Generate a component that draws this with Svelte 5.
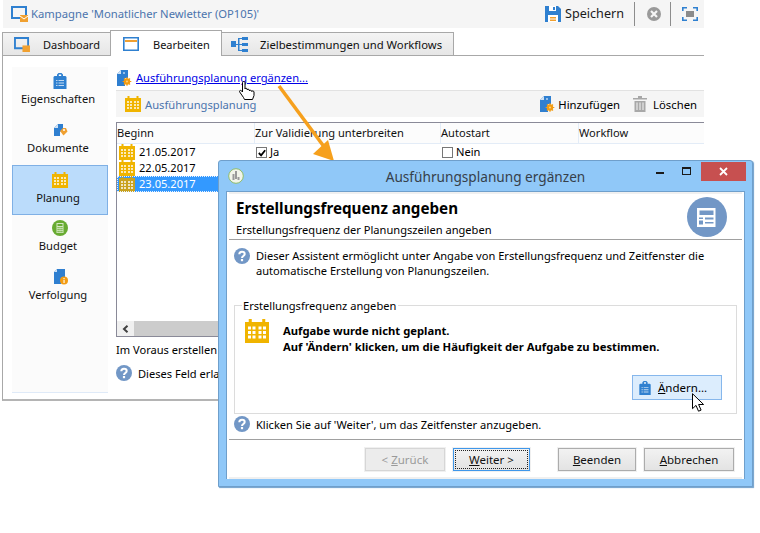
<script>
  const sideItems = [
    { label: 'Eigenschaften', icon: 'clip' },
    { label: 'Dokumente', icon: 'doc' },
    { label: 'Planung', icon: 'cal', active: true },
    { label: 'Budget', icon: 'calc' },
    { label: 'Verfolgung', icon: 'info' }
  ];
  const rows = [
    { date: '21.05.2017', val: 'Ja', start: 'Nein' },
    { date: '22.05.2017' },
    { date: '23.05.2017', selected: true }
  ];
</script>

{#snippet cal(size, color = '#f0b400', cells = 0.72)}
  <svg width={size} height={size} viewBox="0 0 16 16" class="ico">
    <path fill={color} d="M0 2h2.500V0h2v2h7V0h2v2H16v14H0z"/>
    <path fill="#fff" opacity={cells} d="M2 5h2v2H2zM5 5h2v2H5zM9 5h2v2H9zM12 5h2v2h-2zM2 8h2v2H2zM5 8h2v2H5zM9 8h2v2H9zM12 8h2v2h-2zM2 11h2v2H2zM5 11h2v2H5zM9 11h2v2H9zM12 11h2v2h-2z"/>
  </svg>
{/snippet}

{#snippet clip(size)}
  <svg width={size} height={size} viewBox="0 0 16 16" class="ico">
    <path fill="#2f80d0" d="M2.500 3H5V1.500L6.500 0h3L11 1.500V3h2.500l1 1v12h-13V4z"/>
    <path fill="#fff" d="M6.800 1.500h2.400V3H6.800z"/>
    <path fill="#fff" opacity=".7" d="M4 7h1.500v1H4zM6.500 7H12v1H6.500zM4 9.500h1.500v1H4zM6.500 9.500H12v1H6.500zM4 12h1.500v1H4zM6.500 12H12v1H6.500z"/>
  </svg>
{/snippet}

{#snippet docadd(size)}
  <svg width={size} height={size} viewBox="0 0 16 16" class="ico">
    <path fill="#2f7fd0" d="M5 0h7v8H9v8H1V4z"/>
    <path fill="#cfe2f5" d="M5 0v4H1z"/>
    <path fill="#fff" d="M7 2h2v2H7z" opacity=".5"/>
    <circle cx="11" cy="11.500" r="3.200" fill="#f39c12"/>
    <path stroke="#f39c12" stroke-width="1.200" d="M11 7.200v8.600M6.700 11.500h8.600M8 8.500l6 6M14 8.500l-6 6"/>
    <circle cx="11" cy="11.500" r="1" fill="#ffd27a"/>
  </svg>
{/snippet}

{#snippet sideIcon(kind)}
  {#if kind === 'clip'}
    {@render clip(16)}
  {:else if kind === 'doc'}
    <svg width="16" height="16" viewBox="0 0 16 16" class="ico">
      <path fill="#2f7fd0" d="M6 2h5v5l-3 3v4H2V6z"/><path fill="#cfe2f5" d="M6 2v4H2z"/>
      <path fill="#f0a030" d="M8 9l3-3h3l1.500 3.500-4 4z"/>
      <circle cx="12" cy="8" r="1" fill="#fff"/>
    </svg>
  {:else if kind === 'cal'}
    {@render cal(16)}
  {:else if kind === 'calc'}
    <svg width="16" height="16" viewBox="0 0 16 16" class="ico">
      <circle cx="8" cy="8" r="8" fill="#68ab32"/>
      <path fill="#d5e8c3" d="M4.500 3h7v10h-7z"/>
      <path fill="#68ab32" d="M5.500 4h5v2h-5zM5.500 7h1.200v1.200H5.500zM7.400 7h1.200v1.200H7.400zM9.300 7h1.200v1.200H9.300zM5.500 9h1.200v1.200H5.500zM7.400 9h1.200v1.200H7.400zM9.300 9h1.200v1.200H9.300zM5.500 11h1.200v1.200H5.500zM7.400 11h1.200v1.200H7.400zM9.300 11h1.200v1.200H9.300z"/>
    </svg>
  {:else}
    <svg width="16" height="16" viewBox="0 0 16 16" class="ico">
      <path fill="#2f7fd0" d="M5 0h8v9H9v6H2V3z"/><path fill="#cfe2f5" d="M5 0v3H2z"/>
      <circle cx="12" cy="11.500" r="4" fill="#f39c12"/>
      <path fill="#fff" d="M11.500 9h1.100v1.100h-1.100zM11.500 10.800h1.100V14h-1.100z"/>
    </svg>
  {/if}
{/snippet}

{#snippet help(size)}
  <svg width={size} height={size} viewBox="0 0 16 16" class="ico">
    <circle cx="8" cy="8" r="8" fill="#7297c6"/>
    <path fill="none" stroke="#fff" stroke-width="2" d="M5.300 6.200C5.300 4.600 6.500 3.700 8 3.700c1.600 0 2.700 1 2.700 2.300 0 2-2.700 2-2.700 4"/>
    <rect x="6.900" y="11" width="2.200" height="2.200" fill="#fff"/>
  </svg>
{/snippet}

<div class="page">
  <div class="main">
    <header class="titlebar">
      <svg width="17" height="16" viewBox="0 0 17 16" class="ico">
        <path fill="none" stroke="#2f80d0" stroke-width="2" d="M1 1h14v11H1z"/>
        <path fill="#f0a030" d="M9 9h8v7H9z"/>
        <path fill="none" stroke="#fff" d="M9 10l4 3 4-3"/>
      </svg>
      <span class="campaign">Kampagne 'Monatlicher Newletter (OP105)'</span>
      <div class="spacer"></div>
      <svg width="16" height="16" viewBox="0 0 16 16" class="ico">
        <path fill="#2f80d0" d="M0 0h13l3 3v13H0z"/>
        <path fill="#fff" d="M4 0h7v5H4z"/>
        <path fill="#2f80d0" d="M8 1h2v3H8z"/>
        <path fill="#fff" d="M3 9h10v7H3z"/>
        <path fill="#f0a030" d="M5 11h6v1.500H5zM5 13.500h6V15H5z"/>
      </svg>
      <span class="save">Speichern</span>
      <i class="vsep"></i>
      <svg width="16" height="16" viewBox="0 0 16 16" class="ico cancel">
        <circle cx="8" cy="8" r="7" fill="#9a9a9a"/>
        <path stroke="#f5f5f5" stroke-width="2.200" d="M5 5l6 6M11 5l-6 6"/>
      </svg>
      <i class="vsep second"></i>
      <svg width="16" height="14" viewBox="0 0 16 14" class="ico fit">
        <path fill="none" stroke="#2f80d0" stroke-width="1.600" d="M.8 4V.8H5M11 .8h4.200V4M15.200 10v3.200H11M5 13.200H.8V10"/>
        <path fill="#8a8a8a" d="M4 4h8v6H4z"/>
      </svg>
    </header>

    <nav class="tabs">
      <div class="tab first">
        <svg width="16" height="15" viewBox="0 0 17 16" class="ico">
          <path fill="none" stroke="#2f80d0" stroke-width="2" d="M1 1h14v11H1z"/>
          <path fill="#f0a030" d="M9 9h8v7H9z"/>
        </svg>
        <span>Dashboard</span>
      </div>
      <div class="tab active">
        <svg width="16" height="14" viewBox="0 0 16 14" class="ico">
          <path fill="none" stroke="#2f80d0" stroke-width="1.600" d="M.8.8h14.400v12.400H.8z"/>
          <path fill="#f0a030" d="M2 3h12v2H2z"/>
        </svg>
        <span>Bearbeiten</span>
      </div>
      <div class="tab third">
        <svg width="17" height="15" viewBox="0 0 17 15" class="ico">
          <path fill="#2f80d0" d="M0 4h5v6H0zM11 0h6v3h-6zM11 6h6v3h-6zM11 12h6v3h-6zM7 1h1.500v13H7zM7 1h4v1H7zM5 7h6v1H5zM7 13h4v1H7z"/>
        </svg>
        <span>Zielbestimmungen und Workflows</span>
      </div>
    </nav>

    <div class="body">
      <aside class="sidebar">
        {#each sideItems as item}
          <div class="side-item" class:active={item.active}>
            {@render sideIcon(item.icon)}
            <span>{item.label}</span>
          </div>
        {/each}
      </aside>

      <section class="content">
        <div class="linkrow">
          {@render docadd(16)}
          <a href="#top" onclick={(e) => e.preventDefault()}>Ausführungsplanung ergänzen...</a>
        </div>

        <div class="toolbar">
          {@render cal(16)}
          <span class="tool-title">Ausführungsplanung</span>
          <div class="spacer"></div>
          {@render docadd(16)}
          <span class="tool-btn">Hinzufügen</span>
          <svg width="14" height="16" viewBox="0 0 14 16" class="ico trash">
            <path fill="#a8a8a8" d="M0 2h5V0h4v2h5v1.500H0zM1.500 5h11v11h-11z"/>
            <path fill="#f5f5f5" d="M3.500 6.500h1V14h-1zM6.500 6.500h1V14h-1zM9.500 6.500h1V14h-1z"/>
          </svg>
          <span class="tool-btn last">Löschen</span>
        </div>

        <div class="list">
          <div class="row head">
            <span>Beginn</span>
            <span>Zur Validierung unterbreiten</span>
            <span>Autostart</span>
            <span>Workflow</span>
          </div>
          <div class="rows">
            {#each rows as r}
              <div class="row item">
                <span class="date" class:selected={r.selected}>
                  {@render cal(16, r.selected ? '#c9a21e' : '#f0b400')}
                  <b>{r.date}</b>
                </span>
                <span class="check">
                  {#if r.val}<i class="box on"><svg width="10" height="10" viewBox="0 0 11 11"><path fill="none" stroke="#000" stroke-width="2" d="M2 5.500l2.500 2.500L9 2.500"/></svg></i>{r.val}{/if}
                </span>
                <span class="check">
                  {#if r.start}<i class="box"></i>{r.start}{/if}
                </span>
                <span></span>
              </div>
            {/each}
          </div>
          <div class="scroll">
            <span class="scroll-btn">
              <svg width="7" height="8" viewBox="0 0 7 8"><path fill="none" stroke="#404040" stroke-width="2" d="M5.500 .8L2 4l3.500 3.200"/></svg>
            </span>
          </div>
        </div>

        <div class="advance">Im Voraus erstellen</div>
        <div class="hint">
          {@render help(16)}
          <span>Dieses Feld erlaubt</span>
        </div>
      </section>
    </div>
  </div>

  <svg class="arrow" width="70" height="85" viewBox="0 0 70 85">
    <path fill="none" stroke="#f6a01d" stroke-width="3.500" d="M3 2l46 62"/>
    <path fill="#f6a01d" d="M58 77L37 70l15-14z"/>
  </svg>

  <svg class="hand" width="17" height="20" viewBox="0 0 17 20">
    <path fill="#fff" stroke="#000" d="M3.500 1.500c0-1.300 2.500-1.300 2.500 0V8c0-1 2-1 2.200 0V9c0-1 2-1 2.200 0v1c0-1 2-1 2.300 0V10.500c0-.8 2.300-.8 2.300.5v3.500l-1.500 4h-8l-1-2L.7 11c-.7-1.300 1-2.300 2-1l.8 1z"/>
  </svg>

  <div class="dialog">
    <div class="dlg-title">
      <svg width="16" height="16" viewBox="0 0 16 16" class="ico">
        <circle cx="8" cy="8" r="7.300" fill="#f2f5ea" stroke="#8fbc6a"/>
        <path fill="#9a9a9a" d="M7 3h2v8H7zM4.500 6h2v6h-2zM9.500 9h2v3h-2z"/>
      </svg>
      <span class="dlg-name">Ausführungsplanung ergänzen</span>
      <div class="winctl">
        <i class="min"></i>
        <i class="max"></i>
        <span class="close">
          <svg width="9" height="9" viewBox="0 0 9 9"><path stroke="#fff" stroke-width="1.800" d="M1 1l7 7M8 1L1 8"/></svg>
        </span>
      </div>
    </div>

    <div class="dlg-inner">
      <div class="dlg-head">
        <div>
          <h1>Erstellungsfrequenz angeben</h1>
          <p>Erstellungsfrequenz der Planungszeilen angeben</p>
        </div>
        <svg width="40" height="40" viewBox="0 0 40 40" class="ico head-ico">
          <circle cx="20" cy="20" r="20" fill="#7297c6"/>
          <path fill="#fff" d="M10 11h18.500v19H10z"/>
          <path fill="#7297c6" d="M12.500 13.500h14V18h-14zM12 20.500h4v1.500h-4zM12 23.500h4v4h-4zM18 20.500h8.500v2H18zM18 25h8.500v1.500H18z"/>
        </svg>
      </div>

      <div class="intro">
        {@render help(16)}
        <p>Dieser Assistent ermöglicht unter Angabe von Erstellungsfrequenz und Zeitfenster die<br>automatische Erstellung von Planungszeilen.</p>
      </div>

      <fieldset>
        <legend>Erstellungsfrequenz angeben</legend>
        <div class="msg">
          {@render cal(24, '#f0b400', 1)}
          <p>Aufgabe wurde nicht geplant.<br>Auf 'Ändern' klicken, um die Häufigkeit der Aufgabe zu bestimmen.</p>
        </div>
        <div class="change-wrap">
          <button class="change">
            {@render clip(14)}
            <span><u>Ä</u>ndern...</span>
          </button>
        </div>
      </fieldset>

      <div class="next-hint">
        {@render help(16)}
        <span>Klicken Sie auf 'Weiter', um das Zeitfenster anzugeben.</span>
      </div>

      <footer class="dlg-foot">
        <button class="btn back" disabled>&lt; <u>Z</u>urück</button>
        <button class="btn next"><span class="dots"><u>W</u>eiter &gt;</span></button>
        <button class="btn finish"><u>B</u>eenden</button>
        <button class="btn abort"><u>A</u>bbrechen</button>
      </footer>
    </div>
  </div>

  <svg class="pointer" width="13" height="20" viewBox="0 0 13 20">
    <path fill="#fff" stroke="#000" d="M.5.700v15l3.500-3.300 2.500 5.800 2.600-1.100-2.500-5.600h5z"/>
  </svg>
</div>

<style>
  :global(body) { margin: 0; background: #fff; }
  .page {
    position: relative;
    width: 760px;
    height: 533px;
    overflow: hidden;
    background: #fff;
    font-family: "Noto Sans", "Open Sans", sans-serif;
    font-size: 11.100px;
    color: #000;
  }
  .ico { display: block; flex: none; }
  .spacer { flex: 1; }
  u { text-underline-offset: 1px; }

  .main { width: 702px; margin-left: 2px; height: 401px; display: flex; flex-direction: column; }

  .titlebar {
    height: 28px;
    margin-left: 1px;
    padding: 0 0 1px 8px;
    background: #f5f5f5;
    display: flex;
    align-items: center;
    box-sizing: border-box;
    flex: none;
  }
  .campaign { margin-left: 3px; font-size: 11.260px; color: #4b74ad; }
  .save { margin-left: 4px; margin-right: 10px; font-size: 12.600px; color: #1a1a1a; }
  .vsep { width: 1px; height: 24px; background: #8c8c8c; }
  .cancel { margin: 0 8px 0 11px; }
  .vsep.second { margin-right: 11px; }
  .fit { margin-right: 6px; }

  .tabs {
    height: 28px;
    display: flex;
    align-items: flex-end;
    border-bottom: 1px solid #a8a8a8;
    flex: none;
    box-sizing: border-box;
    padding-top: 3px;
  }
  .tab {
    height: 23px;
    display: flex;
    align-items: center;
    box-sizing: border-box;
    border: 1px solid #a8a8a8;
    border-bottom: 0;
    background: linear-gradient(#f4f4f4, #e6e6e6);
    font-size: 11px;
    color: #111;
  }
  .tab span { padding-top: 1px; }
  .tab.first { width: 108px; padding-left: 11px; gap: 13px; border-right: 0; }
  .tab.active {
    width: 112px;
    padding-left: 12px;
    gap: 14px;
    background: #fff;
    margin-bottom: -1px;
    height: 26px;
  }
  .tab.third { width: 232px; padding-left: 9px; gap: 12px; border-left: 0; font-size: 11.300px; }

  .body {
    flex: 1;
    min-height: 0;
    display: flex;
    border-left: 1px solid #a8a8a8;
    border-bottom: 2px solid #b4b4b4;
    padding: 11px 0 6px 9px;
  }
  .sidebar {
    width: 96px;
    flex: none;
    background: #fbfbfb;
    border-bottom: 1px solid #dfeaf8;
    display: flex;
    flex-direction: column;
    padding-top: 6px;
    box-sizing: border-box;
  }
  .side-item {
    height: 49px;
    display: flex;
    flex-direction: column;
    align-items: center;
    gap: 1px;
    box-sizing: border-box;
    color: #111;
  }
  .side-item span { line-height: 17px; margin-right: 4px; font-size: 11.200px; }
  .side-item:nth-child(3) { margin-top: -6px; padding-top: 6px; height: 50px; }
  .side-item:nth-child(4) { height: 54px; padding-top: 5px; }
  .side-item.active { background: #bbdcfb; border: 1px solid #7fb0e5; }

  .content { flex: 1; min-width: 0; margin-left: 8px; display: flex; flex-direction: column; }
  .linkrow { height: 23px; display: flex; align-items: center; gap: 4px; flex: none; padding-bottom: 2px; box-sizing: border-box; }
  .linkrow a { color: #0000e6; font-size: 11.150px; text-decoration: underline; text-underline-offset: 1px; }
  .toolbar {
    height: 27px;
    flex: none;
    background: #f5f5f5;
    border-top: 1px solid #e2e2e2;
    display: flex;
    align-items: center;
    padding: 0 7px 0 9px;
    box-sizing: border-box;
  }
  .tool-title { margin-left: 4px; font-size: 11.200px; color: #4b74ad; }
  .tool-btn { margin-left: 3px; margin-right: 13px; font-size: 11.300px; }
  .tool-btn.last { margin-left: 6px; margin-right: 0; }
  .trash { margin: 0; }

  .list {
    margin-top: 5px;
    height: 215px;
    flex: none;
    display: flex;
    flex-direction: column;
    border-top: 1px solid #8a8a98;
    border-left: 1px solid #8a8a98;
    border-bottom: 1px solid #8a8a98;
    box-sizing: border-box;
  }
  .row { display: grid; grid-template-columns: 138px 186px 138px 1fr; }
  .head {
    height: 21px;
    flex: none;
    align-items: center;
    background: #fcfcfc;
    border-bottom: 1px solid #e3ecf7;
    box-sizing: border-box;
    color: #111;
  }
  .head span { height: 20px; line-height: 20px; border-right: 1px solid #e3ecf7; }
  .head span:last-child { border-right: 0; }
  .rows { flex: 1; min-height: 0; }
  .item { height: 16px; align-items: center; line-height: 16px; }
  .date { display: flex; align-items: center; gap: 4px; padding-left: 2px; height: 16px; width: 101px; }
  .date b { font-weight: 400; }
  .date.selected { background: #3399ff; color: #fff; width: 110px; outline: 1px dotted #e8f2ff; outline-offset: -1px; }
  .check { display: flex; align-items: center; gap: 3px; padding-left: 1px; }
  .box {
    width: 9px;
    height: 9px;
    border: 1px solid #777;
    display: block;
    position: relative;
    background: #fff;
    flex: none;
  }
  .box svg { display: block; }
  .scroll { height: 15px; background: #cccccc; flex: none; display: flex; }
  .scroll-btn { width: 17px; background: #f0f0f0; display: flex; align-items: center; justify-content: center; }
  .advance { margin-top: 4px; height: 18px; line-height: 18px; flex: none; }
  .hint { margin-top: 5px; display: flex; align-items: center; gap: 6px; height: 18px; }

  .arrow { position: absolute; left: 276px; top: 84px; }
  .hand { position: absolute; left: 239px; top: 81px; }
  .pointer { position: absolute; left: 692px; top: 393px; }

  .dialog {
    position: absolute;
    left: 218px;
    top: 160px;
    width: 535px;
    height: 327px;
    box-sizing: border-box;
    background: #90c8f8;
    border: 1px solid #6f9fcb;
    border-radius: 3px 3px 0 0;
    padding: 0 7px 7px;
    display: flex;
    flex-direction: column;
    box-shadow: 1px 1px 1px #6f9fcb;
  }
  .dlg-title { height: 30px; flex: none; display: flex; align-items: center; position: relative; padding-left: 2px; }
  .dlg-name { position: absolute; left: 0; right: 0; text-align: center; font-size: 13.650px; color: #36404a; }
  .winctl { margin-left: auto; display: flex; align-items: flex-start; align-self: flex-start; position: relative; }
  .min { position: absolute; right: 81px; top: 11px; width: 8px; height: 2px; background: #1a1a1a; }
  .max { position: absolute; right: 54px; top: 6px; width: 7px; height: 5px; border: 1px solid #1a1a1a; border-top-width: 2px; }
  .close {
    width: 45px;
    height: 19px;
    margin-top: 1px;
    margin-right: -1px;
    background: #c75050;
    display: flex;
    align-items: center;
    justify-content: center;
  }
  .dlg-inner {
    flex: 1;
    min-height: 0;
    background: #fff;
    border: 1px solid #6f9fcb;
    border-bottom: 0;
    display: flex;
    flex-direction: column;
    padding: 0 2px;
  }
  .dlg-head {
    height: 48px;
    flex: none;
    border-top: 2px solid #f0f0f0;
    border-bottom: 1px solid #a0a0a0;
    display: flex;
    justify-content: space-between;
    box-sizing: border-box;
    padding: 5px 15px 0 7px;
  }
  h1 { margin: 0; font-size: 15.200px; font-weight: 700; line-height: 18px; }
  .dlg-head p { margin: 5px 0 0; line-height: 16px; }
  .head-ico { margin-top: -2px; }
  .intro { display: flex; gap: 6px; padding: 8px 6px 0 5px; height: 58px; box-sizing: border-box; flex: none; }
  .intro p { margin: 0; line-height: 15px; }
  fieldset {
    margin: 0 5px;
    padding: 0;
    height: 116px;
    box-sizing: border-box;
    flex: none;
    border: 1px solid #dcdcdc;
    min-width: 0;
    display: flow-root;
  }
  legend { margin-left: 7px; padding: 0 2px 0 1px; line-height: 16px; height: 14px; }
  .msg { display: flex; padding: 7px 0 0 10px; gap: 14px; }
  .msg p { margin: 0; font-weight: 700; line-height: 16px; padding-top: 4px; font-size: 11.250px; }
  .change-wrap { display: flex; justify-content: flex-end; padding: 20px 14px 0 0; }
  .change {
    width: 90px;
    height: 25px;
    padding: 0 0 0 5px;
    display: flex;
    align-items: center;
    gap: 6px;
    background: #dcedfd;
    border: 1px solid #86b7ec;
    font: inherit;
    font-size: 11.500px;
  }
  .next-hint { display: flex; align-items: center; gap: 6px; padding: 0 5px 5px; height: 25px; box-sizing: border-box; flex: none; }
  .dlg-foot {
    flex: 1;
    border-top: 1px solid #a0a0a0;
    border-bottom: 2px solid #f0f0f0;
    display: flex;
    align-items: flex-start;
    padding: 8px 0 0 136px;
    box-sizing: border-box;
  }
  .btn {
    height: 23px;
    box-sizing: border-box;
    padding: 0;
    font: inherit;
    font-size: 11.500px;
    color: #111;
    border: 1px solid #acacac;
    background: linear-gradient(#f2f2f2, #e3e3e3);
    outline: 1px solid #f0f0f0;
  }
  .back { width: 80px; color: #9a9a9a; background: #ececec; border-color: #d6d6d6; }
  .next { width: 77px; margin-left: 8px; border-color: #3f97ea; padding: 1px; }
  .dots { display: block; height: 100%; line-height: 18px; border: 1px dotted #222; box-sizing: border-box; }
  .finish { width: 78px; margin-left: 28px; }
  .abort { width: 90px; margin-left: 8px; }
</style>
